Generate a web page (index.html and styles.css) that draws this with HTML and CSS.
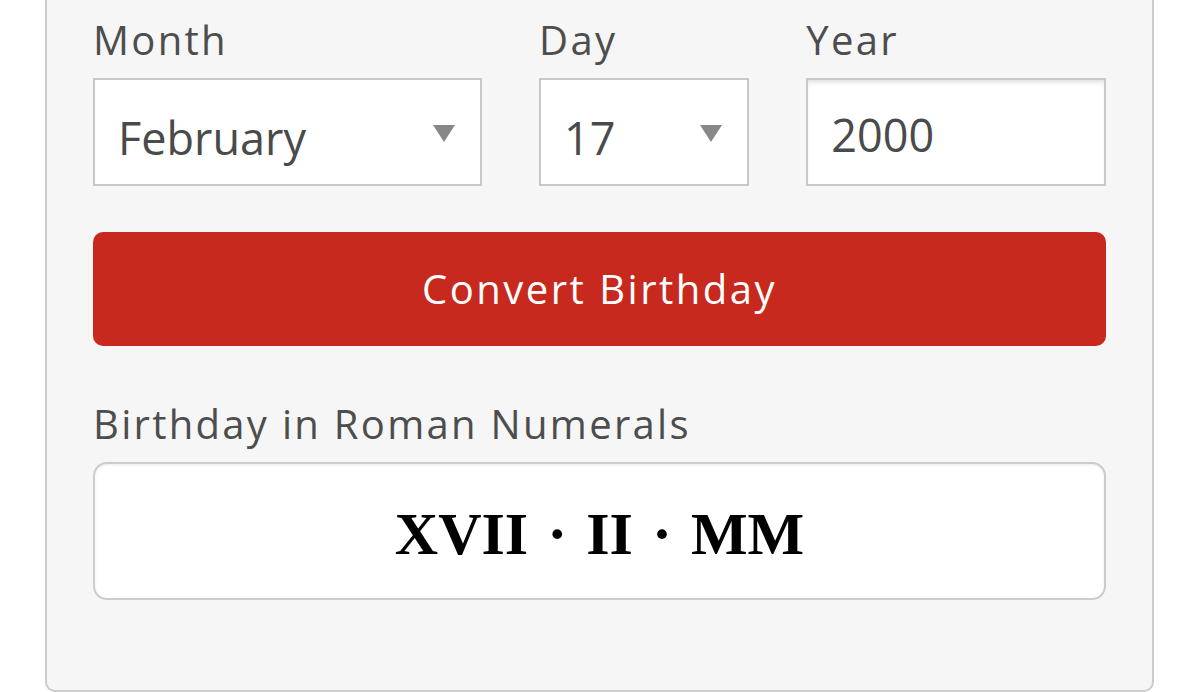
FILE: index.html
```html
<!DOCTYPE html>
<html lang="en">
<head>
<meta charset="utf-8">
<title>Roman Numeral Birthday Converter</title>
<link rel="stylesheet" href="styles.css">
</head>
<body>
<main class="card">
  <div class="fields">
    <div class="field">
      <label class="label">Month</label>
      <div class="select">
        <span class="value">February</span>
        <svg class="caret" width="22" height="17" viewBox="0 0 22 17"><polygon points="0,0 22,0 11,17" fill="#888"/></svg>
      </div>
    </div>
    <div class="field">
      <label class="label">Day</label>
      <div class="select">
        <span class="value">17</span>
        <svg class="caret" width="22" height="17" viewBox="0 0 22 17"><polygon points="0,0 22,0 11,17" fill="#888"/></svg>
      </div>
    </div>
    <div class="field">
      <label class="label">Year</label>
      <div class="input"><span class="value">2000</span></div>
    </div>
  </div>
  <button class="convert">Convert Birthday</button>
  <label class="label result-label">Birthday in Roman Numerals</label>
  <div class="result">XVII · II · MM</div>
</main>
</body>
</html>
```

FILE: styles.css
```css
html, body {
  margin: 0;
  padding: 0;
  background: #ffffff;
}

body {
  font-family: "Open Sans", "Noto Sans", sans-serif;
  color: #4a4a4a;
}

.card {
  box-sizing: border-box;
  width: 1109px;
  margin-left: 45px;
  background: #f6f6f6;
  border: 2px solid #cccccc;
  border-top: 0;
  border-radius: 0 0 10px 10px;
  padding: 20px 46px 88px 46px;
  height: 692px;
}

.fields {
  display: grid;
  grid-template-columns: 389fr 210fr 300fr;
  column-gap: 57.5px;
}

.field {
  display: flex;
  flex-direction: column;
}

.label {
  display: block;
  font-size: 40px;
  line-height: 40px;
  letter-spacing: 2.3px;
  color: #4d4d4d;
  margin: 0 0 18px 0;
}

.select, .input {
  box-sizing: border-box;
  height: 108px;
  background: #ffffff;
  border: 2px solid #c8c8c8;
  display: flex;
  align-items: flex-start;
  justify-content: space-between;
}

.select {
  padding: 35px 25px 0 23px;
}

.input {
  padding: 32px 24px 0 23px;
  box-shadow: inset 0 4px 5px -2px rgba(0, 0, 0, 0.14);
}

.value {
  font-size: 45px;
  line-height: 45px;
  color: #4a4a4a;
}

.caret {
  align-self: center;
  margin-top: -33px;
}

.convert {
  display: flex;
  align-items: center;
  justify-content: center;
  box-sizing: border-box;
  width: 100%;
  height: 114px;
  margin-top: 46px;
  border: 0;
  border-radius: 10px;
  background: #c8291e;
  color: #ffffff;
  font-family: "Open Sans", "Noto Sans", sans-serif;
  font-size: 40px;
  line-height: 40px;
  letter-spacing: 2.5px;
  padding: 0;
}

.result-label {
  margin-top: 58px;
}

.result {
  box-sizing: border-box;
  height: 138px;
  background: #ffffff;
  border: 2px solid #cccccc;
  border-radius: 14px;
  box-shadow: inset 0 1px 3px rgba(0, 0, 0, 0.08);
  display: flex;
  align-items: center;
  justify-content: center;
  font-family: "Liberation Serif", "Times New Roman", serif;
  font-weight: bold;
  font-size: 60px;
  word-spacing: 4px;
  color: #000000;
  padding-top: 6px;
}
```
